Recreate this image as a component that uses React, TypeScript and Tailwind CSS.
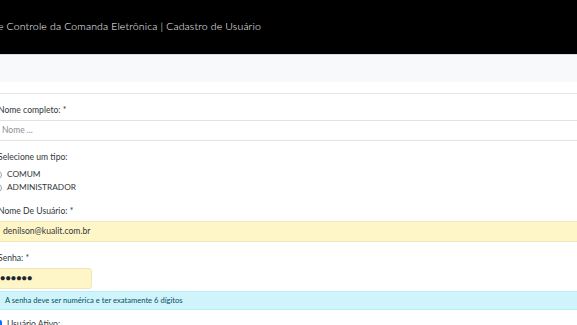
import React from 'react'

const FONT = { fontFamily: 'Lato, "Noto Sans", sans-serif' }

function Label({ children }: { children: React.ReactNode }) {
  return <p className="h-[12px] leading-[12px] text-[8.6px] text-[#33373b] mb-[4px]">{children}</p>
}

export default function App() {
  return (
    <div className="w-[577px] h-[325px] overflow-hidden bg-white" style={FONT}>
      {/* Top bar */}
      <header className="h-[54px] bg-black flex items-center overflow-hidden">
        <span className="-ml-[47px] whitespace-nowrap text-white text-[10.5px] font-light tracking-[0.15px]">
          Sistema de Controle da Comanda Eletrônica | Cadastro de Usuário
        </span>
      </header>

      {/* Breadcrumb strip */}
      <div className="h-[28px] bg-[#f8f9fa] border-t border-[#dcdcdc]" />
      <div className="h-[11px]" />

      {/* Form */}
      <div className="-ml-[2px] w-[620px] border-t border-[#e6e6e6] pt-[10px]">
        <Label>Nome completo: *</Label>
        <div className="h-[21px] border-y border-[#e2e2e2] px-[4px] flex items-center text-[8.5px] text-[#8a8f94]">
          Nome ...
        </div>

        <p className="mt-[10px] h-[12px] leading-[12px] text-[8.6px] text-[#33373b]">Selecione um tipo:</p>
        <div className="mt-[5px] flex flex-col">
          {['COMUM', 'ADMINISTRADOR'].map(t => (
            <label key={t} className="h-[13px] flex items-center text-[8.3px] text-[#33373b]">
              <span className="-ml-[4px] w-[8px] h-[8px] rounded-full border border-[#9ea3a8] bg-white mr-[5px]" />
              {t}
            </label>
          ))}
        </div>

        <p className="mt-[11px] h-[12px] leading-[12px] text-[8.6px] text-[#33373b] mb-[4px]">Nome De Usuário: *</p>
        <div className="h-[21px] bg-[#fff6c8] border border-[#f1e6b8] rounded-[3px] px-[4px] flex items-center text-[8.6px] text-[#33373b]">
          denilson@kualit.com.br
        </div>

        <p className="mt-[10px] h-[12px] leading-[12px] text-[8.6px] text-[#33373b] mb-[4px]">Senha: *</p>
        <div className="w-[94px] h-[21px] bg-[#fff6c8] border border-[#f1e6b8] rounded-[3px] px-[1px] flex items-center text-[8.5px] tracking-[0.3px] text-[#212529]">
          ●●●●●●
        </div>

        <div className="mt-[2px] h-[19px] bg-[#cff4fc] border border-[#b6effb] px-[6px] flex items-center text-[7.6px] text-[#055160]">
          A senha deve ser numérica e ter exatamente 6 dígitos
        </div>

        <label className="mt-[8px] h-[12px] flex items-center text-[8.6px] text-[#33373b]">
          <span className="-ml-[4px] w-[8px] h-[8px] rounded-[2px] bg-[#0d6efd] mr-[5px]" />
          Usuário Ativo:
        </label>
      </div>
    </div>
  )
}
